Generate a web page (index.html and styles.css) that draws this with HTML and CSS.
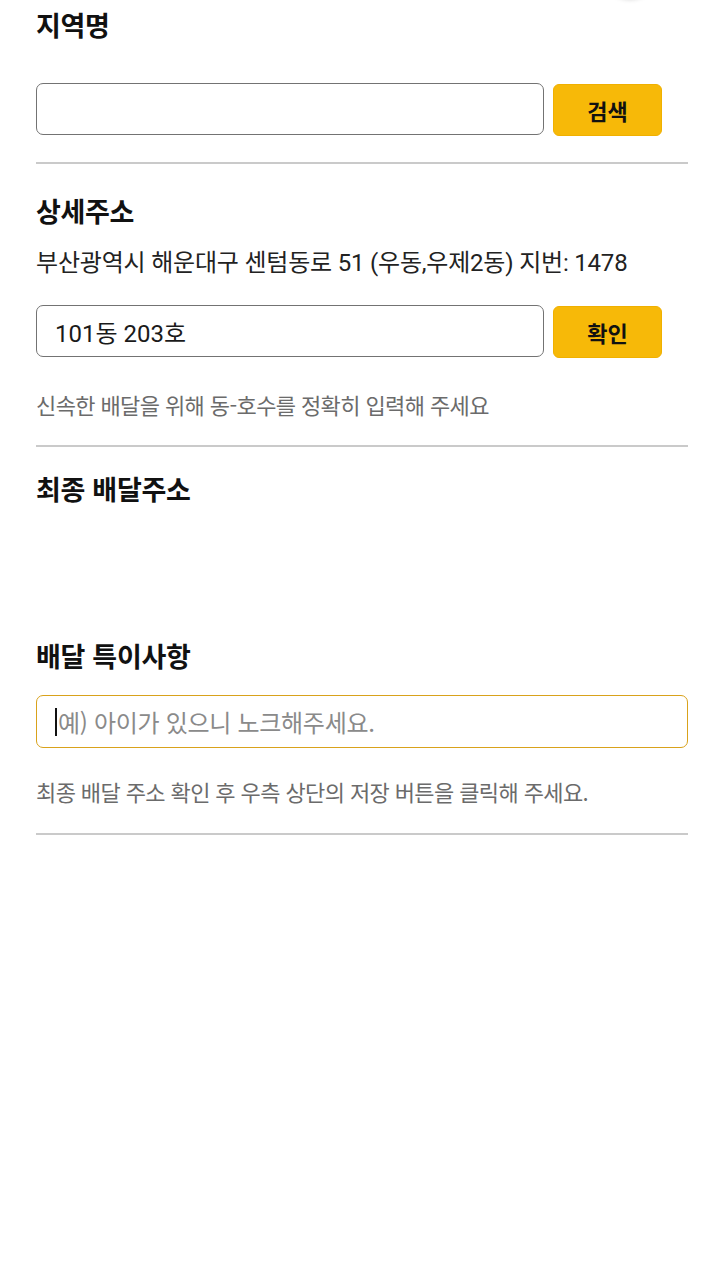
FILE: index.html
```html
<!DOCTYPE html>
<html lang="ko">
<head>
<meta charset="utf-8">
<title>배달 주소</title>
<link rel="stylesheet" href="styles.css">
</head>
<body>
<div class="fab-shadow"></div>
<main class="page">
  <section class="sec">
    <h2 class="title">지역명</h2>
    <div class="row row-first">
      <div class="field"></div>
      <button class="btn">검색</button>
    </div>
  </section>
  <hr class="divider divider-1">
  <section class="sec">
    <h2 class="title title-detail">상세주소</h2>
    <p class="addr">부산광역시 해운대구 센텀동로 51 (우동,우제2동) 지번: 1478</p>
    <div class="row row-detail">
      <div class="field"><span class="value">101동 203호</span></div>
      <button class="btn">확인</button>
    </div>
    <p class="hint hint-detail">신속한 배달을 위해 동-호수를 정확히 입력해 주세요</p>
  </section>
  <hr class="divider divider-2">
  <section class="sec">
    <h2 class="title title-final">최종 배달주소</h2>
    <div class="final-addr"></div>
    <h2 class="title title-note">배달 특이사항</h2>
    <div class="field field-focus"><span class="caret"></span><span class="placeholder">예) 아이가 있으니 노크해주세요.</span></div>
    <p class="hint hint-note">최종 배달 주소 확인 후 우측 상단의 저장 버튼을 클릭해 주세요.</p>
  </section>
  <hr class="divider divider-3">
</main>
</body>
</html>
```

FILE: styles.css
```css
* { box-sizing: border-box; }

html, body {
  margin: 0;
  padding: 0;
  background: #ffffff;
}

body {
  font-family: "Roboto", "Noto Sans CJK KR", sans-serif;
  color: #111111;
  width: 720px;
  min-height: 1275px;
  position: relative;
  overflow: hidden;
}

.fab-shadow {
  position: absolute;
  top: -56px;
  left: 604px;
  width: 52px;
  height: 52px;
  border-radius: 50%;
  background: #ffffff;
  box-shadow: 0 3px 5px rgba(0, 0, 0, 0.22);
}

.page {
  padding: 9px 32px 0 36px;
  display: flex;
  flex-direction: column;
}

.sec {
  display: flex;
  flex-direction: column;
}

.title {
  margin: 0;
  font-family: "Noto Sans CJK KR", sans-serif;
  font-size: 27px;
  line-height: 32px;
  font-weight: 700;
  color: #111111;
  letter-spacing: -0.3px;
}

.title-detail { margin-top: 31px; }
.title-final { margin-top: 26px; }
.title-note { margin-top: 0; }

.final-addr { height: 135px; }

.row {
  display: flex;
  align-items: flex-start;
  gap: 9px;
  margin-right: 26px;
}

.row-first { margin-top: 42px; }
.row-detail { margin-top: 27px; }

.field {
  flex: 1;
  height: 52px;
  border: 1.5px solid #737373;
  border-radius: 7px;
  background: #ffffff;
  display: flex;
  align-items: center;
  padding: 0 18px;
  font-size: 24px;
  color: #1a1a1a;
}

.btn {
  flex: 0 0 109px;
  height: 52px;
  margin-top: 1px;
  border: 1px solid #f0b000;
  border-radius: 6px;
  background: #f7b908;
  font-family: "Noto Sans CJK KR", sans-serif;
  font-size: 22px;
  font-weight: 700;
  color: #111111;
  padding: 0;
}

.addr {
  margin: 21px 0 0;
  font-size: 24px;
  line-height: 30px;
  color: #222222;
  letter-spacing: -0.2px;
}

.hint {
  margin: 0;
  font-family: "Noto Sans CJK KR", sans-serif;
  font-size: 22px;
  line-height: 30px;
  color: #6b6b6b;
  letter-spacing: -0.6px;
}

.hint-detail { margin-top: 31px; }
.hint-note { margin-top: 28px; }

.field-focus {
  flex: none;
  margin-top: 23px;
  height: 53px;
  border-color: #d9a21b;
}

.caret {
  display: inline-block;
  width: 2px;
  height: 28px;
  background: #111111;
  margin-right: 1px;
}

.placeholder {
  color: #8a8a8a;
  font-family: "Noto Sans CJK KR", sans-serif;
  letter-spacing: -0.3px;
}

.divider {
  border: 0;
  height: 2px;
  background: #cacaca;
  margin: 0;
}

.divider-1 { margin-top: 26px; }
.divider-2 { margin-top: 26px; }
.divider-3 { margin-top: 27px; }
```
